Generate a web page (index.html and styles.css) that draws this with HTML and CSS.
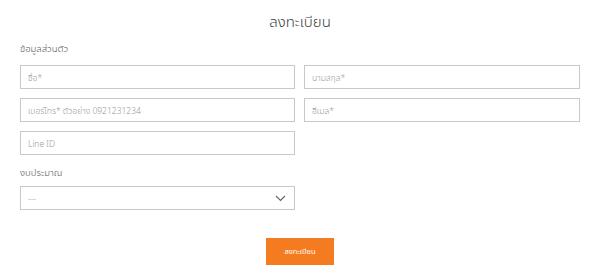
FILE: index.html
```html
<!DOCTYPE html>
<html lang="th">
<head>
    <meta charset="UTF-8">
    <title>ลงทะเบียน</title>
    <link rel="stylesheet" href="styles.css">
</head>
<body>
    <div class="register">
        <h1>ลงทะเบียน</h1>
        <div class="label">ข้อมูลส่วนตัว</div>
        <div class="form-grid">
            <input type="text" placeholder="ชื่อ*">
            <input type="text" placeholder="นามสกุล*">
            <input type="text" placeholder="เบอร์โทร* ตัวอย่าง 0921231234">
            <input type="text" placeholder="อีเมล*">
            <input type="text" placeholder="Line ID">
        </div>
        <div class="label budget">งบประมาณ</div>
        <div class="form-grid budget-grid">
            <div class="select-box">
                <select>
                    <option>---</option>
                </select>
                <svg class="arrow" width="11" height="7" viewBox="0 0 11 7">
                    <path d="M1 1 L5.5 5.5 L10 1" fill="none" stroke="#666" stroke-width="1.2"/>
                </svg>
            </div>
        </div>
        <div class="actions">
            <button>ลงทะเบียน</button>
        </div>
    </div>
</body>
</html>
```

FILE: styles.css
```css
body {
    margin: 0;
    font-family: "Noto Sans", "Noto Sans Thai", "Loma", sans-serif;
    background-color: #fff;
    color: #444;
}
.register {
    padding: 8px 20px 0 20px;
}
h1 {
    margin: 0;
    text-align: center;
    font-size: 15px;
    font-weight: 300;
    line-height: 26px;
    color: #3a3a3a;
}
.label {
    margin-top: 8px;
    font-size: 9.5px;
    font-weight: 300;
    line-height: 14px;
    color: #555;
}
.budget {
    margin-top: 11px;
}
.form-grid {
    display: grid;
    grid-template-columns: 275px 276px;
    column-gap: 9px;
    row-gap: 9px;
    margin-top: 9px;
}
.budget-grid {
    margin-top: 6px;
}
input[type="text"], select {
    box-sizing: border-box;
    width: 100%;
    height: 24px;
    padding: 0 7px;
    border: 1px solid #c8c8c8;
    border-radius: 0;
    font-family: inherit;
    font-size: 8.5px;
    font-weight: 300;
    color: #444;
    background: #fff;
    outline: none;
}
input::placeholder {
    color: #999;
}
.select-box {
    position: relative;
}
select {
    display: block;
    appearance: none;
    -webkit-appearance: none;
    color: #999;
}
.arrow {
    position: absolute;
    right: 9px;
    top: 9px;
    pointer-events: none;
}
.actions {
    display: flex;
    justify-content: center;
    margin-top: 28px;
}
button {
    width: 68px;
    height: 27px;
    border: none;
    background-color: #f47b20;
    color: #fff;
    font-family: inherit;
    font-size: 7.5px;
    cursor: pointer;
}
```
